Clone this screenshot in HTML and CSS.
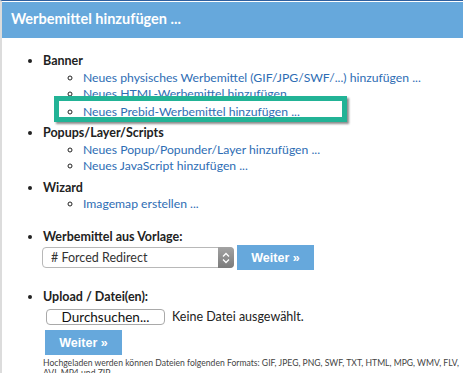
FILE: index.html
```html
<!DOCTYPE html>
<html lang="de">
<head>
  <meta charset="UTF-8">
  <title>Werbemittel hinzufügen</title>
  <meta name="viewport" content="width=device-width, initial-scale=1.0">
  <link rel="stylesheet" href="styles.css">
</head>
<body>
  <div class="panel">
    <div class="panel-head">Werbemittel hinzufügen ...</div>

    <div class="panel-body">
      <ul class="menu">
        <li>
          <b>Banner</b>
          <ul class="sub">
            <li><a href="#">Neues physisches Werbemittel (GIF/JPG/SWF/...) hinzufügen ...</a></li>
            <li><a href="#">Neues HTML-Werbemittel hinzufügen ...</a></li>
            <li class="mark"><a href="#">Neues Prebid-Werbemittel hinzufügen ...</a></li>
          </ul>
        </li>
        <li>
          <b>Popups/Layer/Scripts</b>
          <ul class="sub">
            <li><a href="#">Neues Popup/Popunder/Layer hinzufügen ...</a></li>
            <li><a href="#">Neues JavaScript hinzufügen ...</a></li>
          </ul>
        </li>
        <li>
          <b>Wizard</b>
          <ul class="sub">
            <li><a href="#">Imagemap erstellen ...</a></li>
          </ul>
        </li>

        <li class="form-item">
          <b>Werbemittel aus Vorlage:</b>
          <div class="tpl-row">
            <span class="select-wrap">
              <select class="select">
                <option># Forced Redirect</option>
                <option># Click Tracker</option>
              </select>
              <span class="stepper">
                <svg width="8" height="14" viewBox="0 0 8 14">
                  <path d="M1 5.5 L4 2.5 L7 5.5" fill="none" stroke="#fff" stroke-width="1.3"/>
                  <path d="M1 8.5 L4 11.5 L7 8.5" fill="none" stroke="#fff" stroke-width="1.3"/>
                </svg>
              </span>
            </span>
            <button class="btn">Weiter »</button>
          </div>
        </li>

        <li class="form-item upload">
          <b>Upload / Datei(en):</b>
          <div class="file-row">
            <button class="file-btn">Durchsuchen...</button>
            <span class="file-name">Keine Datei ausgewählt.</span>
          </div>
          <button class="btn btn-upload">Weiter »</button>
        </li>
      </ul>

      <p class="note">
        Hochgeladen werden können Dateien folgenden Formats: GIF, JPEG, PNG, SWF, TXT, HTML, MPG, WMV, FLV,<br>
        AVI, MP4 und ZIP.
      </p>
    </div>
  </div>
</body>
</html>
```

FILE: styles.css
```css
/* Reset */
*, *::before, *::after {
  margin: 0;
  padding: 0;
  box-sizing: border-box;
}

body {
  font-family: "Lato", "Open Sans", sans-serif;
  font-size: 12.5px;
  color: #222;
  background: #fff;
  overflow: hidden;
}

/* Panel */
.panel {
  border-left: 2px solid #dcdcdc;
  border-top: 1px solid #2f5f9e;
  min-height: 100vh;
}

.panel-head {
  background: #66a8dc;
  color: #fff;
  font-size: 14.5px;
  font-weight: 700;
  height: 36px;
  line-height: 34px;
  padding-left: 9px;
  margin-top: 1px;
}

.panel-body {
  padding-top: 15px;
}

/* Menu list */
.menu {
  list-style: disc;
  padding-left: 41px;
  line-height: 16.5px;
}

.menu > li {
  margin-bottom: 5px;
}

.menu b {
  font-weight: 700;
  color: #222;
}

.sub {
  list-style: circle;
  padding-left: 40px;
  font-size: 12.2px;
}

.sub a {
  color: #2e6db4;
  text-decoration: none;
}

.sub a:hover {
  text-decoration: underline;
}

/* highlighted entry */
.mark {
  position: relative;
  z-index: 0;
  margin-top: 1px;
}

.mark::before {
  content: '';
  position: absolute;
  left: -29px;
  top: -8px;
  width: 293px;
  height: 26px;
  border: 5px solid #22b396;
  background: #fff;
  box-shadow: 2px 2px 2px rgba(0, 0, 0, 0.45);
  z-index: -1;
}

/* Forms */
.form-item {
  margin-top: 16px;
}

.tpl-row {
  display: flex;
  align-items: center;
  gap: 3px;
  margin-left: -1px;
}

.select-wrap {
  position: relative;
  display: inline-block;
  height: 21px;
}

.select {
  appearance: none;
  -webkit-appearance: none;
  width: 192px;
  height: 21px;
  border: 1px solid #b8b8b8;
  border-radius: 4px;
  background: #fff;
  font-family: "Lato", "Open Sans", sans-serif;
  font-size: 12.5px;
  color: #333;
  padding-left: 8px;
  outline: none;
}

.stepper {
  position: absolute;
  right: 0;
  top: 0;
  width: 16px;
  height: 21px;
  border-radius: 0 4px 4px 0;
  background: linear-gradient(#a3a3a3, #7b7b7b);
  display: flex;
  align-items: center;
  justify-content: center;
  pointer-events: none;
}

.btn {
  background: #66a8dc;
  color: #fff;
  border: none;
  width: 77px;
  height: 25px;
  font-family: "Liberation Sans", Arial, sans-serif;
  font-size: 12.5px;
  font-weight: 700;
  cursor: pointer;
}

.btn:hover {
  background: #4f93cb;
}

.upload {
  margin-top: 19px;
}

.file-row {
  display: flex;
  align-items: center;
  gap: 7px;
  margin-top: 3px;
  margin-left: 3px;
}

.file-btn {
  width: 119px;
  height: 16px;
  border: 1px solid #a9a9a9;
  border-radius: 4px;
  background: #fff;
  font-family: "Lato", "Open Sans", sans-serif;
  font-size: 13.5px;
  line-height: 14px;
  color: #111;
}

.file-name {
  font-size: 12.5px;
  color: #222;
}

.btn-upload {
  display: block;
  margin-top: 5px;
  margin-left: 2px;
}

.note {
  padding-left: 41px;
  margin-top: -2px;
  font-size: 8.6px;
  line-height: 10px;
  color: #444;
  white-space: nowrap;
}
```
